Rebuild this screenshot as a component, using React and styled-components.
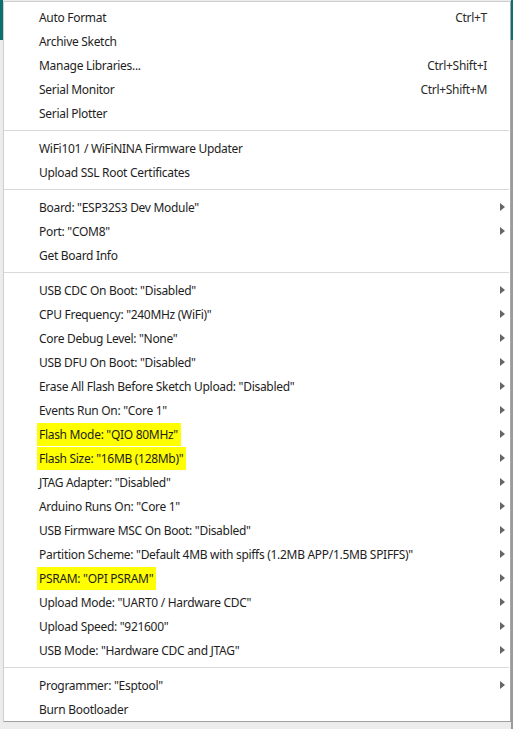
import React from "react";
import styled, { createGlobalStyle } from "styled-components";

const Global = createGlobalStyle`
  html, body { margin: 0; padding: 0; }
  body {
    width: 513px;
    height: 729px;
    overflow: hidden;
    background:
      linear-gradient(to bottom, #0e6f70 0, #0e6f70 40px, transparent 40px) left top / 3px 100% no-repeat,
      linear-gradient(to bottom, #0e6f70 0, #0e6f70 40px, #9a9a9a 40px) right top / 2px 100% no-repeat,
      #ececec;
    font-family: "Segoe UI", "Noto Sans", sans-serif;
  }
`;

const Menu = styled.div`
  margin: 1px 2px 0 3px;
  width: 506px;
  background: #ffffff;
  border: 1px solid #cfcfcf;
  border-right-color: #a8a8a8;
  border-bottom-color: #a0a0a0;
  padding: 3px 0 0 0;
  display: flex;
  flex-direction: column;
`;

const Row = styled.div`
  display: grid;
  grid-template-columns: 1fr auto 17px;
  align-items: center;
  height: 24px;
  padding: 0 6px 0 35px;
  font-size: 12px;
  letter-spacing: -0.3px;
  color: #1e1e1e;
  white-space: nowrap;
`;

const Label = styled.span`
  justify-self: start;
  padding: ${(p) => (p.$hl ? "3px 3px 3px 2px" : "0")};
  margin-left: ${(p) => (p.$hl ? "-2px" : "0")};
  background: ${(p) => (p.$hl ? "#ffff00" : "transparent")};
`;

const Shortcut = styled.span`
  color: #2a2a2a;
`;

const Arrow = styled.span`
  justify-self: end;
  margin-right: -1px;
  width: 0;
  height: 0;
  border-top: 4.5px solid transparent;
  border-bottom: 4.5px solid transparent;
  border-left: 5px solid #666666;
`;

const Separator = styled.div`
  height: 1px;
  margin: 5px 1px 5px 0;
  background: #d9d9d9;
`;

const groups = [
  [
    { t: "Auto Format", k: "Ctrl+T" },
    { t: "Archive Sketch" },
    { t: "Manage Libraries...", k: "Ctrl+Shift+I" },
    { t: "Serial Monitor", k: "Ctrl+Shift+M" },
    { t: "Serial Plotter" },
  ],
  [
    { t: "WiFi101 / WiFiNINA Firmware Updater" },
    { t: "Upload SSL Root Certificates" },
  ],
  [
    { t: 'Board: "ESP32S3 Dev Module"', s: true },
    { t: 'Port: "COM8"', s: true },
    { t: "Get Board Info" },
  ],
  [
    { t: 'USB CDC On Boot: "Disabled"', s: true },
    { t: 'CPU Frequency: "240MHz (WiFi)"', s: true },
    { t: 'Core Debug Level: "None"', s: true },
    { t: 'USB DFU On Boot: "Disabled"', s: true },
    { t: 'Erase All Flash Before Sketch Upload: "Disabled"', s: true },
    { t: 'Events Run On: "Core 1"', s: true },
    { t: 'Flash Mode: "QIO 80MHz"', s: true, hl: true },
    { t: 'Flash Size: "16MB (128Mb)"', s: true, hl: true },
    { t: 'JTAG Adapter: "Disabled"', s: true },
    { t: 'Arduino Runs On: "Core 1"', s: true },
    { t: 'USB Firmware MSC On Boot: "Disabled"', s: true },
    { t: 'Partition Scheme: "Default 4MB with spiffs (1.2MB APP/1.5MB SPIFFS)"', s: true },
    { t: 'PSRAM: "OPI PSRAM"', s: true, hl: true },
    { t: 'Upload Mode: "UART0 / Hardware CDC"', s: true },
    { t: 'Upload Speed: "921600"', s: true },
    { t: 'USB Mode: "Hardware CDC and JTAG"', s: true },
  ],
  [
    { t: 'Programmer: "Esptool"', s: true },
    { t: "Burn Bootloader" },
  ],
];

export default function App() {
  return (
    <>
      <Global />
      <Menu>
        {groups.map((g, gi) => (
          <React.Fragment key={gi}>
            {gi > 0 && <Separator />}
            {g.map((it) => (
              <Row key={it.t}>
                <Label $hl={it.hl}>{it.t}</Label>
                <Shortcut>{it.k || ""}</Shortcut>
                {it.s ? <Arrow /> : <span />}
              </Row>
            ))}
          </React.Fragment>
        ))}
      </Menu>
    </>
  );
}
